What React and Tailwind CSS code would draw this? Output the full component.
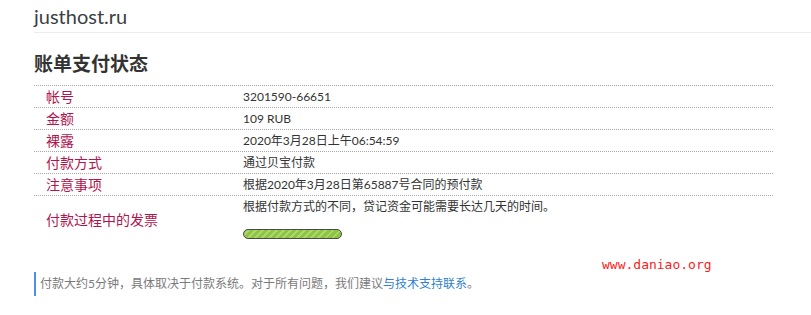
import React from 'react';

const rows = [
  { label: '帐号', value: '3201590-66651' },
  { label: '金额', value: '109 RUB' },
  { label: '裸露', value: '2020年3月28日上午06:54:59' },
  { label: '付款方式', value: '通过贝宝付款' },
  { label: '注意事项', value: '根据2020年3月28日第65887号合同的预付款' },
];

const font = "font-['Lato','Noto_Sans_CJK_SC',sans-serif]";

const App = () => {
  return (
    <div className={`relative w-[811px] h-[315px] bg-white overflow-hidden ${font}`}>
      <div className="pl-[34px]">
        <div className="h-[33px] border-b border-[#ececec] text-[20px] leading-[32px] text-[#3a3f44]">
          justhost.ru
        </div>

        <h1 className="mt-[17px] text-[19px] leading-[28px] font-bold text-[#333]">账单支付状态</h1>

        <div className="mt-[7px] w-[739px] border-t border-dotted border-[#a8a8a8]">
          {rows.map((row) => (
            <div key={row.label} className="flex h-[22px] items-center border-b border-dotted border-[#a8a8a8]">
              <div className="w-[209px] pl-[12px] text-[14px] text-[#b0154d]">{row.label}</div>
              <div className="text-[12px] text-[#333]">{row.value}</div>
            </div>
          ))}
          <div className="flex h-[46px] items-center">
            <div className="w-[209px] pl-[12px] text-[14px] text-[#b0154d]">付款过程中的发票</div>
            <div className="flex flex-col self-start pt-[3px]">
              <div className="text-[12px] leading-[16px] text-[#333]">根据付款方式的不同，贷记资金可能需要长达几天的时间。</div>
              <div className="mt-[14px] h-[10px] w-[99px] rounded-full border border-[#4a4a4a] bg-[#8dc53e] bg-[repeating-linear-gradient(-45deg,rgba(255,255,255,0.28)_0px,rgba(255,255,255,0.28)_2px,transparent_2px,transparent_5px)]" />
            </div>
          </div>
        </div>

        <div className="mt-[30px] border-l-2 border-[#4f8ef0] pl-[4px] h-[24px] flex items-center text-[12px] text-[#7a7a7a]">
          付款大约5分钟，具体取决于付款系统。对于所有问题，我们建议
          <span className="text-[#2f7fcf]">与技术支持联系</span>。
        </div>
      </div>

      <div className="absolute left-[602px] top-[257px] text-[13px] leading-[16px] text-[#ff1a1a] font-['DejaVu_Sans_Mono',monospace]">
        www.daniao.org
      </div>
    </div>
  );
};

export default App;
